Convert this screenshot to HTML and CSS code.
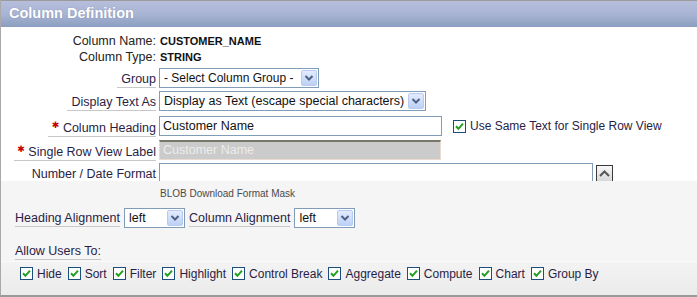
FILE: index.html
```html
<!DOCTYPE html>
<html>
<head>
<meta charset="utf-8">
<link rel="stylesheet" href="styles.css">
</head>
<body>
<div class="region">
  <div class="region-head">Column Definition</div>
  <div class="main">
    <div class="row info">
      <div class="lbl plain">Column Name:</div>
      <div class="val">CUSTOMER_NAME</div>
    </div>
    <div class="row info">
      <div class="lbl plain">Column Type:</div>
      <div class="val">STRING</div>
    </div>
    <div class="row field first">
      <div class="lbl"><span class="u">Group</span></div>
      <div class="ctl">
        <div class="select w-group"><span class="sel-text">- Select Column Group -</span><span class="sel-btn"><svg width="14" height="14" viewBox="0 0 14 14"><path d="M3.5 5 L7 8.5 L10.5 5" fill="none" stroke="#4d6185" stroke-width="2"/></svg></span></div>
      </div>
    </div>
    <div class="row field second">
      <div class="lbl"><span class="u">Display Text As</span></div>
      <div class="ctl">
        <div class="select w-display"><span class="sel-text">Display as Text (escape special characters)</span><span class="sel-btn"><svg width="14" height="14" viewBox="0 0 14 14"><path d="M3.5 5 L7 8.5 L10.5 5" fill="none" stroke="#4d6185" stroke-width="2"/></svg></span></div>
      </div>
    </div>
    <div class="row field">
      <div class="lbl"><span class="u"><span class="req">&#10033;</span> Column Heading</span></div>
      <div class="ctl">
        <div class="input w-heading">Customer Name</div>
        <span class="check-wrap same"><svg class="cb" width="13" height="13" viewBox="0 0 13 13"><rect x="0.5" y="0.5" width="12" height="12" fill="#fff" stroke="#1c4f7e"/><path d="M3 6.3 L5.4 8.8 L10 3.6" fill="none" stroke="#22a022" stroke-width="2"/></svg><span>Use Same Text for Single Row View</span></span>
      </div>
    </div>
    <div class="row field">
      <div class="lbl"><span class="u wide"><span class="req">&#10033;</span> Single Row View Label</span></div>
      <div class="ctl">
        <div class="input disabled w-single">Customer Name</div>
      </div>
    </div>
    <div class="row field last">
      <div class="lbl"><span class="u">Number / Date Format</span></div>
      <div class="ctl">
        <div class="input w-number"></div>
        <span class="up-btn"><svg width="15" height="15" viewBox="0 0 15 15"><path d="M3 10 L7.5 5.5 L12 10" fill="none" stroke="#555" stroke-width="2"/></svg></span>
      </div>
    </div>
  </div>
  <div class="lower">
    <div class="hint">BLOB Download Format Mask</div>
    <div class="align-row">
      <span class="u">Heading Alignment</span>
      <div class="select w-align"><span class="sel-text">left</span><span class="sel-btn"><svg width="14" height="14" viewBox="0 0 14 14"><path d="M3.5 5 L7 8.5 L10.5 5" fill="none" stroke="#4d6185" stroke-width="2"/></svg></span></div>
      <span class="u">Column Alignment</span>
      <div class="select w-align"><span class="sel-text">left</span><span class="sel-btn"><svg width="14" height="14" viewBox="0 0 14 14"><path d="M3.5 5 L7 8.5 L10.5 5" fill="none" stroke="#4d6185" stroke-width="2"/></svg></span></div>
    </div>
    <div class="allow"><span class="u">Allow Users To:</span></div>
  </div>
  <div class="checks">
    <span class="check-wrap"><svg class="cb" width="13" height="13" viewBox="0 0 13 13"><rect x="0.5" y="0.5" width="12" height="12" fill="#fff" stroke="#1c4f7e"/><path d="M3 6.3 L5.4 8.8 L10 3.6" fill="none" stroke="#22a022" stroke-width="2"/></svg><span>Hide</span></span>
    <span class="check-wrap"><svg class="cb" width="13" height="13" viewBox="0 0 13 13"><rect x="0.5" y="0.5" width="12" height="12" fill="#fff" stroke="#1c4f7e"/><path d="M3 6.3 L5.4 8.8 L10 3.6" fill="none" stroke="#22a022" stroke-width="2"/></svg><span>Sort</span></span>
    <span class="check-wrap"><svg class="cb" width="13" height="13" viewBox="0 0 13 13"><rect x="0.5" y="0.5" width="12" height="12" fill="#fff" stroke="#1c4f7e"/><path d="M3 6.3 L5.4 8.8 L10 3.6" fill="none" stroke="#22a022" stroke-width="2"/></svg><span>Filter</span></span>
    <span class="check-wrap"><svg class="cb" width="13" height="13" viewBox="0 0 13 13"><rect x="0.5" y="0.5" width="12" height="12" fill="#fff" stroke="#1c4f7e"/><path d="M3 6.3 L5.4 8.8 L10 3.6" fill="none" stroke="#22a022" stroke-width="2"/></svg><span>Highlight</span></span>
    <span class="check-wrap"><svg class="cb" width="13" height="13" viewBox="0 0 13 13"><rect x="0.5" y="0.5" width="12" height="12" fill="#fff" stroke="#1c4f7e"/><path d="M3 6.3 L5.4 8.8 L10 3.6" fill="none" stroke="#22a022" stroke-width="2"/></svg><span>Control Break</span></span>
    <span class="check-wrap"><svg class="cb" width="13" height="13" viewBox="0 0 13 13"><rect x="0.5" y="0.5" width="12" height="12" fill="#fff" stroke="#1c4f7e"/><path d="M3 6.3 L5.4 8.8 L10 3.6" fill="none" stroke="#22a022" stroke-width="2"/></svg><span>Aggregate</span></span>
    <span class="check-wrap"><svg class="cb" width="13" height="13" viewBox="0 0 13 13"><rect x="0.5" y="0.5" width="12" height="12" fill="#fff" stroke="#1c4f7e"/><path d="M3 6.3 L5.4 8.8 L10 3.6" fill="none" stroke="#22a022" stroke-width="2"/></svg><span>Compute</span></span>
    <span class="check-wrap"><svg class="cb" width="13" height="13" viewBox="0 0 13 13"><rect x="0.5" y="0.5" width="12" height="12" fill="#fff" stroke="#1c4f7e"/><path d="M3 6.3 L5.4 8.8 L10 3.6" fill="none" stroke="#22a022" stroke-width="2"/></svg><span>Chart</span></span>
    <span class="check-wrap"><svg class="cb" width="13" height="13" viewBox="0 0 13 13"><rect x="0.5" y="0.5" width="12" height="12" fill="#fff" stroke="#1c4f7e"/><path d="M3 6.3 L5.4 8.8 L10 3.6" fill="none" stroke="#22a022" stroke-width="2"/></svg><span>Group By</span></span>
  </div>
</div>
</body>
</html>
```

FILE: styles.css
```css
html, body {
  margin: 0;
  padding: 0;
  background: #ffffff;
}
body {
  font-family: "Liberation Sans", Arial, sans-serif;
  font-size: 12px;
  color: #222;
  width: 697px;
  height: 297px;
  overflow: hidden;
}
.region {
  width: 720px;
  height: 297px;
  border-left: 1px solid #a9a9a9;
  border-bottom: 2px solid #9a9a9a;
  display: flex;
  flex-direction: column;
  box-sizing: border-box;
}
.region-head {
  height: 27px;
  flex: none;
  box-sizing: border-box;
  border-top: 1px solid #9a9a9a;
  background: linear-gradient(#b6bedc, #a9b4d3 50%, #8b9ec0);
  color: #fff;
  font-weight: bold;
  font-size: 14.5px;
  line-height: 24px;
  padding-left: 8px;
  text-shadow: 0 0 1px rgba(80, 90, 130, 0.5);
}
.main {
  background: #fff;
  height: 154px;
  flex: none;
  padding-top: 6px;
  box-sizing: border-box;
}
.row {
  display: grid;
  grid-template-columns: 155px 1fr;
  column-gap: 3px;
}
.row.info {
  height: 16px;
  line-height: 16px;
}
.row.field {
  height: 20px;
  margin-top: 4px;
}
.row.field.first {
  margin-top: 3px;
}
.row.field.second {
  margin-top: 3px;
}
.lbl {
  text-align: right;
  color: #2a1d45;
  font-size: 12.5px;
}
.lbl.plain {
  color: #222;
}
.row.field .lbl {
  align-self: end;
}
.u {
  display: inline-block;
  border-bottom: 1px solid #c8c8c8;
  line-height: 16px;
  padding-left: 4px;
  color: #2a1d45;
  font-size: 12.5px;
}
.row.field .lbl .u {
  padding-top: 2px;
}
.u.wide {
  padding-left: 3px;
}
.req {
  color: #c40000;
  font-size: 9px;
  vertical-align: 4px;
  font-family: "DejaVu Sans", sans-serif;
}
.val {
  font-weight: bold;
  font-size: 11px;
  padding-left: 1px;
  color: #111;
}
.ctl {
  display: flex;
  align-items: center;
}
.select {
  height: 20px;
  box-sizing: border-box;
  border: 1px solid #7f9db9;
  background: #fff;
  display: flex;
  align-items: center;
  justify-content: space-between;
  font-size: 12.5px;
  color: #111;
}
.sel-text {
  padding-left: 4px;
  white-space: nowrap;
}
.sel-btn {
  width: 16px;
  height: 16px;
  flex: none;
  margin-right: 1px;
  box-sizing: border-box;
  border: 1px solid #b8cbef;
  border-radius: 2px;
  background: linear-gradient(#e3ecfe, #bdd0f6);
  display: flex;
  align-items: center;
  justify-content: center;
}
.w-group { width: 160px; }
.w-group .sel-text { font-size: 12px; }
.w-display { width: 267px; }
.w-align { width: 61px; }
.input {
  height: 20px;
  box-sizing: border-box;
  border: 1px solid #7f9db9;
  background: #fff;
  padding-left: 3px;
  line-height: 18px;
  font-size: 12.5px;
  color: #111;
}
.input.disabled {
  background: #cbcbcb;
  border: 1px solid #eadad0;
  border-top: 2px solid #77776a;
  color: #ececec;
  line-height: 16px;
}
.w-heading { width: 283px; }
.w-single { width: 282px; }
.w-number { width: 434px; }
.check-wrap {
  display: inline-flex;
  align-items: center;
  gap: 4px;
  white-space: nowrap;
  color: #2a1d45;
  font-size: 12px;
}
.cb {
  flex: none;
  display: block;
}
.same {
  margin-left: 11px;
}
.row.last {
  margin-bottom: -2px;
}
.up-btn {
  width: 17px;
  height: 17px;
  box-sizing: border-box;
  margin-left: 3px;
  border: 1px solid #3a3a3a;
  background: linear-gradient(#f8f8f8, #d8d8d8);
  display: flex;
  align-items: center;
  justify-content: center;
}
.lower {
  background: #f5f5f5;
  padding-top: 7px;
  padding-left: 14px;
  height: 81px;
  flex: none;
  box-sizing: border-box;
  border-bottom: 1px solid #fbfbf6;
}
.hint {
  font-size: 10px;
  line-height: 12px;
  color: #4a4a4a;
  padding-left: 145px;
}
.align-row {
  margin-top: 8px;
  display: flex;
  align-items: flex-end;
  gap: 4px;
}
.align-row .u {
  padding-left: 0;
  margin-bottom: 1px;
}
.allow {
  margin-top: 15px;
}
.allow .u {
  padding-left: 0;
}
.checks {
  flex: 1;
  background: linear-gradient(#f3f3f3, #ebebeb);
  display: flex;
  align-items: center;
  gap: 6px;
  padding-left: 19px;
  padding-bottom: 10px;
  box-sizing: border-box;
}
```
